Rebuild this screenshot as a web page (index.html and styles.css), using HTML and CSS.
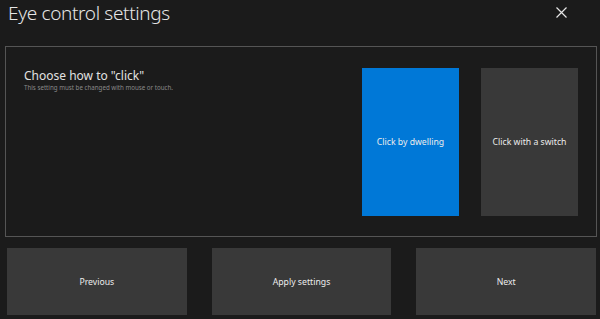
FILE: index.html
```html
<!DOCTYPE html>
<html lang="en">
<head>
<meta charset="utf-8">
<title>Eye control settings</title>
<link rel="stylesheet" href="styles.css">
</head>
<body>
<div class="app">
  <header class="header">
    <h1 class="title">Eye control settings</h1>
    <button class="close" aria-label="Close">
      <svg width="11" height="11" viewBox="0 0 11 11"><path d="M0.5 0.5L10.5 10.5M10.5 0.5L0.5 10.5" stroke="#e6e6e6" stroke-width="1.2" fill="none"/></svg>
    </button>
  </header>
  <section class="panel">
    <div class="panel-text">
      <h2 class="panel-title">Choose how to "click"</h2>
      <p class="panel-sub">This setting must be changed with mouse or touch.</p>
    </div>
    <div class="options">
      <button class="option option-active">Click by dwelling</button>
      <button class="option">Click with a switch</button>
    </div>
  </section>
  <nav class="footer">
    <button class="nav-btn">Previous</button>
    <button class="nav-btn">Apply settings</button>
    <button class="nav-btn">Next</button>
  </nav>
</div>
</body>
</html>
```
FILE: styles.css
```css
*, *::before, *::after {
  box-sizing: border-box;
}
html, body {
  margin: 0;
  padding: 0;
  background: #1b1b1b;
  width: 600px;
  height: 319px;
  overflow: hidden;
  font-family: "Noto Sans", "Open Sans", sans-serif;
  color: #e6e6e6;
}
.app {
  display: flex;
  flex-direction: column;
  height: 319px;
}
.header {
  flex: 0 0 46px;
  display: flex;
  align-items: flex-start;
  justify-content: space-between;
  padding: 0 33px 0 8px;
}
.title {
  margin: 0;
  font-size: 19px;
  font-weight: 300;
  letter-spacing: -0.35px;
  line-height: 26px;
  color: #e6e6e6;
}
.close {
  background: none;
  border: 0;
  padding: 0;
  margin-top: 7px;
  display: flex;
  cursor: pointer;
}
.panel {
  flex: 0 0 191px;
  margin: 0 3px 0 5px;
  border: 1px solid #555;
  display: flex;
  justify-content: space-between;
  padding: 21px 18px 20px 18px;
}
.panel-title {
  margin: 0;
  font-size: 12px;
  font-weight: 400;
  line-height: 15px;
  color: #e2e2e2;
}
.panel-sub {
  margin: 0;
  font-size: 6.2px;
  line-height: 9px;
  color: #8a8a8a;
}
.options {
  display: flex;
  gap: 22px;
}
.option {
  width: 97px;
  height: 148px;
  border: 0;
  background: #393939;
  color: #ececec;
  font-family: inherit;
  font-size: 8.7px;
  padding: 0;
}
.option-active {
  background: #0078d7;
}
.footer {
  flex: 0 0 auto;
  display: grid;
  grid-template-columns: 1fr 1fr 1fr;
  gap: 25px;
  padding: 11px 4px 0 7px;
}
.nav-btn {
  height: 67px;
  border: 0;
  background: #393939;
  color: #ececec;
  font-family: inherit;
  font-size: 8.7px;
  padding: 0;
}
```
